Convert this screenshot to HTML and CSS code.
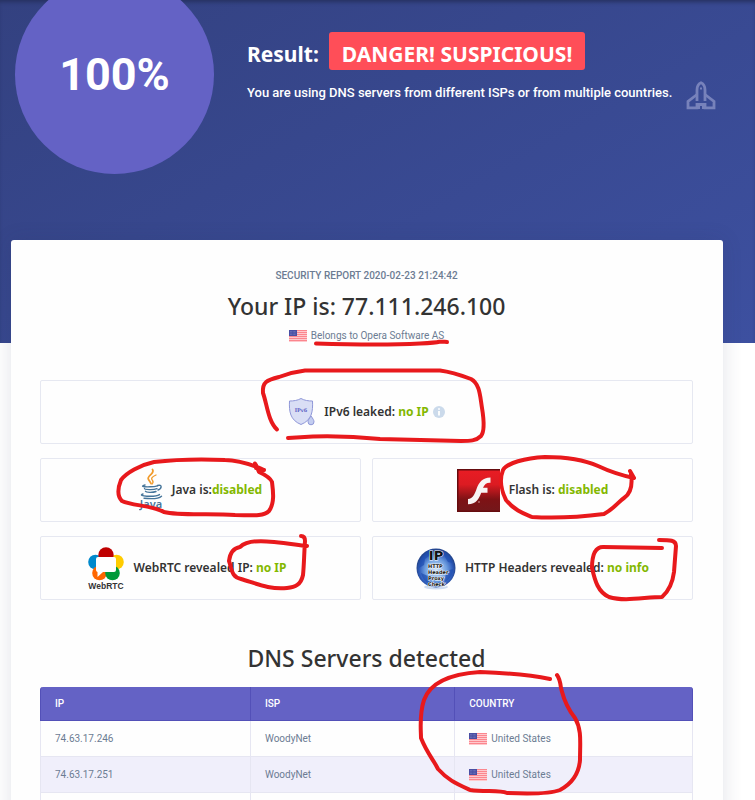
FILE: index.html
```html
<!DOCTYPE html>
<html lang="en">
<head>
<meta charset="utf-8">
<meta name="viewport" content="width=device-width, initial-scale=1">
<title>Security report</title>
<link rel="stylesheet" href="styles.css">
</head>
<body>
<svg class="defs" aria-hidden="true">
  <symbol id="flag-us" viewBox="0 0 18 12">
    <rect width="18" height="12" fill="#ffc9cd"/>
    <path d="M0 .5h18M0 2.500h18M0 4.500h18M0 6.500h18M0 8.500h18M0 10.500h18" stroke="#fb868e"/>
    <rect width="8" height="6" fill="#4a4fa3"/>
    <path d="M1 1.500h6M1 3h6M1 4.500h6" stroke="#8f92cb" stroke-width=".6" stroke-dasharray=".7 .7"/>
  </symbol>
</svg>

<header class="hero">
  <div class="score">100%</div>
  <div class="verdict">
    <h1 class="verdict-title">Result: <span class="badge">DANGER! SUSPICIOUS!</span></h1>
    <p class="verdict-text">You are using DNS servers from different ISPs or from multiple countries.</p>
  </div>
  <svg class="shuttle" viewBox="0 0 30 30" aria-hidden="true">
    <g fill="none" stroke="currentColor" stroke-width="2.800">
      <path d="M11 20V9c0-3.500 1.600-6.300 4-7.300C17.400 2.700 19 5.500 19 9v11"/>
      <path d="M11 13.500 2 20.500v6.300h9v-3.300h8v3.300h9v-6.300l-9-7"/>
      <path d="M10 26h4M16 26h4" stroke-width="4"/>
      <path d="M14 7.500h2" stroke-width="2"/>
    </g>
  </svg>
</header>

<main class="card">
  <p class="report-date">SECURITY REPORT 2020-02-23 21:24:42</p>
  <h2 class="heading">Your IP is: 77.111.246.100</h2>
  <p class="owner"><svg class="flag" aria-hidden="true"><use href="#flag-us"/></svg>Belongs to Opera Software AS</p>

  <section class="checks">
    <div class="check check-wide">
      <svg class="icon-shield" viewBox="0 0 27 30" aria-hidden="true">
        <path d="M13 1.500C9.500 3.500 5.500 4 1.500 4 1 14.500 2 23 13 27.500 24 23 25 14.500 24.500 4 20.500 4 16.500 3.500 13 1.500Z" fill="#d9def5" stroke="#8f97d8"/>
        <text x="13" y="15" text-anchor="middle" font-family="DejaVu Serif" font-weight="700" font-size="5" fill="#5c5fc4">IPv6</text>
        <path d="M23 19c2 2.800 3 4.300 3 5.800a3 3 0 0 1-6 0c0-1.500 1-3 3-5.800Z" fill="#c3cdf0" stroke="#8f97d8"/>
      </svg>
      <span>IPv6 leaked: <b>no IP</b></span>
      <svg class="icon-info" viewBox="0 0 12 12" aria-hidden="true">
        <circle cx="6" cy="6" r="6" fill="#cbdaeb"/>
        <path d="M6 2.200v1.600M6 5v4.500" stroke="#fff" stroke-width="1.800"/>
      </svg>
    </div>
    <div class="check">
      <svg class="icon-java" viewBox="0 0 24 44" aria-hidden="true">
        <g fill="none" stroke="#f19b2c" stroke-linecap="round">
          <path d="M13.500 1.500c3 4-6.500 6.500-4 10 1 1.700 2 2.500 2.500 4" stroke-width="1.800"/>
          <path d="M17 7c-4 1.700-5.500 3.500-3.500 5.500 1.200 1.500.5 2.500-.5 3.500" stroke-width="1.300"/>
        </g>
        <g fill="none" stroke="#46759a" stroke-width="1.400" stroke-linecap="round">
          <path d="M6 17c-4 1-3.500 2 5 1.800 3.500 0 6-.5 7.500-1"/>
          <path d="M5.500 20.500c0 1.300 9 1.500 12.500.2M6.500 23.300c.5 1.300 7.500 1.400 10.500.2"/>
          <path d="M18.500 17.500c5-1.500 4.500 3 .5 4.500"/>
          <path d="M4 26c-7 2.200 12 3.500 16.500.6M5 30.200c7 .8 15 .3 17.500-2"/>
        </g>
        <text x="12" y="40" text-anchor="middle" font-family="Noto Sans" font-size="11" fill="#46759a">Java</text>
      </svg>
      <span>Java is:<b>disabled</b></span>
    </div>
    <div class="check">
      <svg class="icon-flash" viewBox="0 0 43 43" aria-hidden="true">
        <defs>
          <linearGradient id="flash-red" x2="0" y2="1">
            <stop stop-color="#e81c24"/><stop offset=".35" stop-color="#dc1b22"/><stop offset=".72" stop-color="#7e1215"/><stop offset="1" stop-color="#74171a"/>
          </linearGradient>
        </defs>
        <rect width="43" height="43" fill="#650b0e"/>
        <path d="M1.500 1.500H43V41.500H1.500Z" fill="url(#flash-red)"/>
        <path d="M33.500 8.500v5.300c-4-.3-6 1.500-7.500 5h4.500v5h-6.300c-2.200 6-5 11.500-13.200 11.500v-5.200c5-.4 6.600-4.500 8.700-10.500C22 13.500 25.200 8.500 33.500 8.500Z" fill="#f8f4f4"/>
        <circle cx="22" cy="33" r=".8" fill="#d9a7a8"/>
      </svg>
      <span>Flash is: <b>disabled</b></span>
    </div>
    <div class="check check-webrtc">
      <svg class="icon-webrtc" viewBox="0 0 36 44" aria-hidden="true">
        <circle cx="7.500" cy="16" r="7.300" fill="#0089cc"/>
        <circle cx="28.500" cy="16" r="7.300" fill="#fc0"/>
        <circle cx="11.500" cy="27" r="7.300" fill="#f60"/>
        <circle cx="24.500" cy="27" r="7.300" fill="#009939"/>
        <circle cx="18" cy="9" r="7.700" fill="#bf0000"/>
        <path d="M10 11h16a2 2 0 0 1 2 2v11a2 2 0 0 1-2 2H15l-5.500 5V26a2 2 0 0 1-1.500-2V13a2 2 0 0 1 2-2Z" fill="#fff"/>
        <text x="18" y="43" text-anchor="middle" font-family="Liberation Sans" font-weight="700" font-size="8.500" fill="#333">WebRTC</text>
      </svg>
      <span>WebRTC revealed IP: <b>no IP</b></span>
    </div>
    <div class="check">
      <svg class="icon-globe" viewBox="0 0 40 43" aria-hidden="true">
        <defs>
          <radialGradient id="globe-blue" cx=".5" cy=".55" r=".5">
            <stop stop-color="#d5e6fa"/><stop offset=".55" stop-color="#6f9fe0"/><stop offset=".85" stop-color="#2f5dbc"/><stop offset="1" stop-color="#24468f"/>
          </radialGradient>
        </defs>
        <ellipse cx="20" cy="40" rx="12" ry="2.500" fill="#cfdcf0"/>
        <circle cx="20" cy="21" r="19.500" fill="url(#globe-blue)"/>
        <path d="M4 13c4-7 8-10 12-11l-3 7-4 3-1 6-5 3ZM27 4c5 2 9 7 10 12l-5-1-3-5ZM5 26l7 3 2 8C9 35 6 31 5 26ZM30 24l7-2c0 6-4 11-8 13Z" fill="#1f4fb0" opacity=".7"/>
        <g font-family="DejaVu Sans" font-weight="700" fill="#111" stroke="#fff" stroke-width="1" paint-order="stroke">
          <text x="20" y="13" text-anchor="middle" font-size="13">IP</text>
          <text x="12" y="21" font-size="5">HTTP</text>
          <text x="12" y="27" font-size="5">Header</text>
          <text x="12" y="33" font-size="5">Proxy</text>
          <text x="12" y="39" font-size="5">Check</text>
        </g>
      </svg>
      <span>HTTP Headers revealed: <b>no info</b></span>
    </div>
  </section>

  <h2 class="heading">DNS Servers detected</h2>
  <table class="servers">
    <thead>
      <tr><th scope="col">IP</th><th scope="col">ISP</th><th scope="col">COUNTRY</th></tr>
    </thead>
    <tbody>
      <tr><td>74.63.17.246</td><td>WoodyNet</td><td><span class="country"><svg class="flag" aria-hidden="true"><use href="#flag-us"/></svg>United States</span></td></tr>
      <tr><td>74.63.17.251</td><td>WoodyNet</td><td><span class="country"><svg class="flag" aria-hidden="true"><use href="#flag-us"/></svg>United States</span></td></tr>
      <tr><td></td><td></td><td></td></tr>
    </tbody>
  </table>
</main>

<svg class="marks" viewBox="0 0 755 800" aria-hidden="true">
  <path d="M316 343.500C350 344.500 390 345 420 343.500S432 341 447 342"/>
  <path d="M277 429.500C268 421 267 404 263 393C262 382 267 380 279 377Q292 372 305 370.500H440C452 372 463 376 471 379C480 384 480 396 482 408C484 420 485 431 481 436C476 441 470 441 461 441L380 439C350 436 330 436 313 436.500L288 438"/>
  <path d="M255 463.500L256 468L264 470M264 470C248 463 235 460 225 460C200 459 180 459 154 462C140 465 126 473 121 480C117 490 118 497 122 501C132 506 152 505 164 512C180 516 210 513 235 515C250 515 263 517 269 511C275 503 273 490 272 482Q270 477 259 472L256 465"/>
  <path d="M630 471L634 478Q615 474 598 466C580 458 560 457 545 457C525 458 507 463 503 470C499 480 502 492 506 500C515 511 525 514 532 517Q565 519 604 514C615 508 618 502 624 498C630 494 633 487 631 474"/>
  <path d="M301 536Q305 536 305 541C304 556 304 566 303 575C301 585 295 587 287 588C270 590 255 583 241 579C231 577 232 569 229 561C230 553 234 548 240 547C250 537 275 542 307 546"/>
  <path d="M662 548L603 547C594 547 592 557 592 568C595 581 598 592 609 597C625 602 645 597 662 597C670 590 673 580 674 572L676 546C676 540 670 540 659 540"/>
  <path d="M550 679C530 675 505 673 480 672C450 674 430 683 424 700C419 715 421 730 421 738C427 753 433 759 438 769C448 780 455 783 470 790C485 792 500 790 507 793C530 794 550 794 560 790C573 783 579 773 580 760C580 742 582 730 575 718C564 704 563 695 561 688Q560 679 557 675"/>
</svg>
</body>
</html>
```

FILE: styles.css
```css
* { box-sizing: border-box; }

html { height: 100%; overflow: hidden; }

body {
  position: relative;
  min-height: 100%;
  margin: 0;
  background: #fff;
  color: #6c7c93;
  font-family: Roboto, sans-serif;
  font-size: 10px;
  line-height: 16px;
}

h1, h2, p { margin: 0; }

.defs { display: none; }

.hero {
  display: flex;
  align-items: flex-start;
  gap: 33px;
  height: 343px;
  padding: 0 39px 0 15px;
  overflow: hidden;
  color: #fff;
  background: linear-gradient(150deg, #334180, #3d50a0);
  box-shadow: inset 0 4px 4px -2px #26315f;
}

.score {
  flex: none;
  width: 199px;
  height: 199px;
  margin-top: -25px;
  border-radius: 50%;
  background: #6462c5;
  font-size: 45px;
  font-weight: 700;
  line-height: 199px;
  text-align: center;
}

.verdict { flex: 1; min-width: 0; padding-top: 32px; }

.verdict-title {
  display: flex;
  align-items: baseline;
  gap: 10px;
  padding-bottom: 14px;
  font-family: "Noto Sans", sans-serif;
  font-size: 21px;
  font-weight: 700;
  white-space: nowrap;
}

.badge {
  padding: 6px 13px 0;
  border-radius: 3px;
  background: #ff4e58;
  line-height: 32px;
}

.verdict-text {
  font-size: 13px;
  font-weight: 500;
  line-height: 18px;
  white-space: nowrap;
}

.shuttle {
  flex: none;
  width: 30px;
  height: 30px;
  margin-top: 81px;
  color: #7782bb;
}

.card {
  margin: -103px 32px 0 11px;
  padding: 28px 30px 0 29px;
  border-radius: 3px;
  background: #fefefe;
  box-shadow: 0 0 20px rgba(40, 50, 90, .14);
  text-align: center;
}

.report-date { font-weight: 500; }

.heading {
  color: #333;
  font-family: "Noto Sans", sans-serif;
  font-size: 23px;
  font-weight: 500;
  line-height: 30px;
}

.report-date + .heading { margin: 7px 0; }

.owner, .country {
  display: flex;
  align-items: center;
  gap: 4px;
}

.owner { justify-content: center; }

.flag { flex: none; width: 18px; height: 12px; }

.checks {
  display: grid;
  grid-template-columns: 1fr 1fr;
  gap: 14px 11px;
  margin: 36px 0 43px;
}

.check {
  display: flex;
  align-items: center;
  justify-content: center;
  gap: 9px;
  height: 64px;
  border: 1px solid #e6e8f1;
  border-radius: 2px;
  color: #333;
  font-family: "Noto Sans", sans-serif;
  font-size: 12px;
  font-weight: 600;
  white-space: nowrap;
}

.check b { color: #83b800; font-weight: 700; }
.check-wide { grid-column: 1 / -1; }
.check-webrtc { padding-right: 26px; }

.icon-shield { width: 27px; height: 30px; }
.icon-info { width: 12px; height: 12px; margin-left: -5px; }
.icon-java { width: 24px; height: 44px; }
.icon-flash { width: 43px; height: 43px; }
.icon-webrtc { width: 36px; height: 44px; overflow: visible; }
.icon-globe { width: 40px; height: 43px; }

.servers {
  width: 100%;
  margin-top: 14px;
  border-collapse: separate;
  border-spacing: 0;
  table-layout: fixed;
  text-align: left;
}

.servers th, .servers td {
  height: 36px;
  padding: 0 14px;
  border: solid #e6e6f2;
  border-width: 0 1px 1px 0;
}

.servers th {
  height: 34px;
  border-color: #5350b8;
  background: #6462c5;
  color: #fff;
  font-weight: 500;
}

.servers th:first-child, .servers td:first-child { width: 32.3%; border-left-width: 1px; }
.servers th:nth-child(2) { width: 31.3%; }
.servers th:first-child { border-top-left-radius: 3px; }
.servers th:last-child { border-top-right-radius: 3px; }
.servers tbody tr:nth-child(even) { background: #f0effb; }

.marks {
  position: absolute;
  top: 0;
  left: 0;
  width: 755px;
  height: 800px;
  fill: none;
  stroke: #e8191c;
  stroke-width: 4;
  stroke-linecap: round;
  stroke-linejoin: round;
  pointer-events: none;
}
```
